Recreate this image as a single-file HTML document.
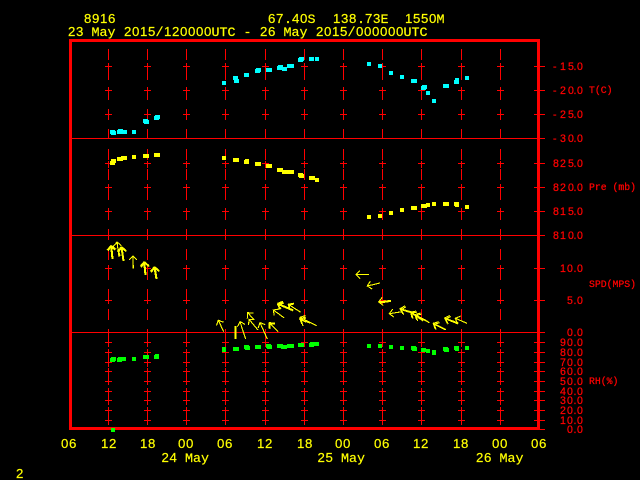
<!DOCTYPE html>
<html><head><meta charset="utf-8"><style>
html,body{margin:0;padding:0;background:#000;width:640px;height:480px;overflow:hidden}
svg{display:block;position:absolute;left:0;top:0}
.y{font:13.33px "Liberation Mono",monospace;fill:#ff0;stroke:#ff0;stroke-width:.2}
.n{font:13.2px "Liberation Sans",sans-serif;fill:#ff0;stroke:#ff0;stroke-width:.2}
.r{font:10.6px "Liberation Sans",sans-serif;fill:#f00;stroke:#f00;stroke-width:.25}
.l{font:9.8px "Liberation Mono",monospace;fill:#f00;stroke:#f00;stroke-width:.25}
</style></head><body>
<svg width="640" height="480" viewBox="0 0 640 480" xmlns="http://www.w3.org/2000/svg">
<defs>
<path id="c" fill="none" stroke="#f00" stroke-width="1" shape-rendering="crispEdges" d="M.5 49V60M.5 63V80M.5 87V100M.5 109V120M.5 129V139M.5 149V160M.5 161V168M.5 169V180M.5 184V200M.5 208V220M.5 229V240M.5 249V260M.5 265V280M.5 289V304M.5 309V320M.5 329V347M.5 349V367M.5 368V385M.5 388V405M.5 407V425M-3 66.5H4M-3 90.5H4M-3 114.5H4M-3 163.5H4M-3 187.5H4M-3 211.5H4M-3 268.5H4M-3 300.5H4M-3 342.5H4M-3 352.5H4M-3 362.5H4M-3 371.5H4M-3 381.5H4M-3 391.5H4M-3 400.5H4M-3 410.5H4M-3 420.5H4"/>
</defs>
<rect width="640" height="480" fill="#000"/>
<use href="#c" x="108"/><use href="#c" x="147"/><use href="#c" x="186"/><use href="#c" x="225"/><use href="#c" x="265"/><use href="#c" x="304"/><use href="#c" x="343"/><use href="#c" x="382"/><use href="#c" x="421"/><use href="#c" x="461"/><use href="#c" x="500"/>
<path fill="none" stroke="#f00" stroke-width="1" shape-rendering="crispEdges" d="M69 138.5H545M69 235.5H545M69 332.5H545M534 66.5H545M534 90.5H545M534 114.5H545M534 163.5H545M534 187.5H545M534 211.5H545M534 268.5H545M534 300.5H545M534 342.5H545M534 352.5H545M534 362.5H545M534 371.5H545M534 381.5H545M534 391.5H545M534 400.5H545M534 410.5H545M534 420.5H545M534 429.5H545"/>
<rect x="70.5" y="40.5" width="468" height="388" fill="none" stroke="#f00" stroke-width="3" shape-rendering="crispEdges"/>

<path fill="none" stroke="#0ff" stroke-width="4" stroke-linecap="square" shape-rendering="crispEdges" d="M112 132h1M113 133h1M119 132h1M120 131h1M122 132h1M124 132h1M134 132h.01M145 121h1M146 122h1M156 118h1M157 117h1M224 83h.01M235 78h1M236 81h1M246 75h1M257 71h1M258 70h1M268 70h1M269 70h1M279 68h1M280 67h1M284 69h1M289 66h1M291 66h1M300 60h1M301 59h1M311 59h1M317 59h.01M369 64h.01M380 66h.01M391 73h.01M402 77h.01M413 81h1M414 81h1M423 88h1M424 87h1M428 93h.01M434 101h.01M445 86h1M446 86h1M456 82h1M457 80h.01M467 78h.01"/>
<path fill="none" stroke="#ff0" stroke-width="4" stroke-linecap="square" shape-rendering="crispEdges" d="M112 163h1M113 161h1M119 159h1M120 159h1M123 158h1M124 158h1M134 157h.01M145 156h1M146 156h1M156 155h1M157 155h1M224 158h.01M235 160h1M236 160h1M246 162h1M247 161h.01M257 164h1M258 164h1M268 166h1M269 166h1M279 170h1M280 170h1M284 172h1M289 172h1M291 172h1M300 175h1M301 176h1M311 178h1M312 178h1M317 180h.01M369 217h.01M380 216h.01M391 213h.01M402 210h.01M413 208h1M414 208h1M423 206h1M424 206h1M428 205h.01M434 204h.01M445 204h1M446 204h1M456 204h1M457 205h.01M467 207h.01"/>
<path fill="none" stroke="#0f0" stroke-width="4" stroke-linecap="square" shape-rendering="crispEdges" d="M112 360h1M113 359h1M119 360h1M120 359h1M124 359h.01M134 359h.01M145 357h1M146 357h1M156 357h1M157 356h.01M113 430h.01M224 350h.01M224 349h.01M235 349h1M236 349h1M246 347h1M247 348h1M257 347h1M258 347h1M268 346h1M269 347h1M279 346h1M280 346h1M283 347h1M284 347h1M289 346h1M291 346h1M300 345h1M301 345h1M311 345h1M312 344h1M317 344h.01M369 346h.01M380 346h.01M391 347h.01M402 348h.01M413 348h1M414 349h1M423 350h1M424 350h.01M428 351h.01M434 352h.01M434 353h.01M445 349h1M446 350h1M456 348h1M457 349h.01M467 348h.01"/>

<path fill="none" stroke="#ff0" stroke-width="1.1" shape-rendering="crispEdges" d="
M112 259L110.7 245.7M107.1 250.1L110.7 245.7L115.1 249.3
M113 259L111.7 245.7M108.1 250.1L111.7 245.7L116.1 249.3M108 251L111 246.7L115 250
M119 257L117 242M113.4 246.4L117 242L121.4 245.6
M123 261L121 247M117.4 251.4L121 247L125.4 250.6
M124 261L122 247M118.4 251.4L122 247L126.4 250.6M118 252.4L122 248L126 251.6
M120 256L118 248
M133.3 268.7L133 256M129 260L133 256L137 260
M145 275L143.7 262M140.1 266.4L143.7 262L148.1 265.6
M146 275L144.7 262M141.1 266.4L144.7 262L149.1 265.6M141 267.4L144.7 263L149 266.6
M156 279L154 267M150.4 271.4L154 267L158.4 270.6
M157 279L155 267M151.4 271.4L155 267L159.4 270.6M151 272.4L155 268L159 271.6
M223.7 331.7L218.3 320.3M216.4 325.6L218.3 320.3L223.6 322.2
M235 326V339M236 326V339
M245.7 339L240 321.7M237.4 326.7L240 321.7L245 324.3
M258 330L249 319.3M248.6 324.9L249 319.3L254.6 319.7
M254.3 320L247.7 312.7M247.3 318.3L247.7 312.7L253.3 313.1
M267.3 339L260 322.7M258.1 328L260 322.7L265.3 324.6
M278.3 331.7L269.3 322.7M268.9 328.3L269.3 322.7L274.9 323.1
M270 328L270 323L275 323M270 329L270 324L275 324M269 323H275M269 324H274
M284 317.7L273.3 310M274.2 315.6L273.3 310L278.9 309.1
M293.3 310L277.7 303.3M279.8 308.5L277.7 303.3L282.9 301.2
M293.3 311L277.7 304.3M279.8 309.5L277.7 304.3L282.9 302.2M281 309L278 305L284 303
M300.7 312.3L288.3 304.3M289.5 309.8L288.3 304.3L293.8 303.1M290 310L289 305L294 304
M316.7 325.7L300 317.3M301.8 322.7L300 317.3L305.4 315.5
M310 323L299 319M301.8 324L300 319L305.4 317M303 326L301 320L306 318M306 322L301 320
M369 274.3L356 274.7M360 278.7L356 274.7L360 270.7
M380 283L367.3 286M372.1 289L367.3 286L370.3 281.2
M391 300.3L378.7 302M383.2 305.4L378.7 302L382.1 297.5
M391 301.3L379.7 303
M402 311.7L389.3 313.7M393.8 317.1L389.3 313.7L392.7 309.2
M413 312.3L400 308.7M402.8 313.6L400 308.7L404.9 305.9
M413 313.3L401 309.7M403.8 314.6L401 309.7L405.9 306.9
M423.3 320L410.7 312.3M412 317.8L410.7 312.3L416.2 311
M423.3 321L411.7 313.3M413 318.8L411.7 313.3L417.2 312
M428.3 321.7L415 314.7M416.7 320.1L415 314.7L420.4 313
M429.3 322.7L416 315.7M417.7 321.1L416 315.7L421.4 314
M446 329.7L433.3 323.3M435 328.7L433.3 323.3L438.7 321.6
M445 329.7L434.3 324.3M436 329.7L434.3 324.3L439.7 322.6
M458.3 323L444.7 318M447.1 323.1L444.7 318L449.8 315.6
M458.3 324L445.7 319M448.1 324.1L445.7 319L450.8 316.6
M467 323.3L455.3 318.3M457.4 323.5L455.3 318.3L460.5 316.2"/>

<text class="n" x="84 92 100 108" y="23">8916</text>
<text y="23"><tspan class="n" x="268 276">67</tspan><tspan class="y" x="284">.</tspan><tspan class="n" x="292 300">40</tspan><tspan class="y" x="307.5">S</tspan></text>
<text y="23"><tspan class="n" x="333 341 349">138</tspan><tspan class="y" x="357">.</tspan><tspan class="n" x="365 373">73</tspan><tspan class="y" x="380.5">E</tspan></text>
<text y="23"><tspan class="n" x="405 413 421 429">1550</tspan><tspan class="y" x="436.5">M</tspan></text>
<text y="36"><tspan class="n" x="68 76">23</tspan><tspan class="y" x="91.5">May</tspan><tspan class="n" x="124 132 140 148">2015</tspan><tspan class="y" x="155.5">/</tspan><tspan class="n" x="164 172 180 188 196 204">120000</tspan><tspan class="y" x="211.5">UTC</tspan><tspan class="y" x="243.5">-</tspan><tspan class="n" x="260 268">26</tspan><tspan class="y" x="283.5">May</tspan><tspan class="n" x="316 324 332 340">2015</tspan><tspan class="y" x="347.5">/</tspan><tspan class="n" x="356 364 372 380 388 396">000000</tspan><tspan class="y" x="403.5">UTC</tspan></text>

<text class="r" x="553 560 568 573.5 577" y="70">-15.0</text>
<text class="r" x="553 560 568 573.5 577" y="94">-20.0</text>
<text class="r" x="553 560 568 573.5 577" y="118">-25.0</text>
<text class="r" x="553 560 568 573.5 577" y="142">-30.0</text>
<text class="r" x="553 560 568 573.5 577" y="167">825.0</text>
<text class="r" x="553 560 568 573.5 577" y="191">820.0</text>
<text class="r" x="553 560 568 573.5 577" y="215">815.0</text>
<text class="r" x="553 560 568 573.5 577" y="239">810.0</text>
<text class="r" x="560 567 573.5 577" y="272">10.0</text>
<text class="r" x="567 573.5 577" y="304">5.0</text>
<text class="r" x="567 573.5 577" y="336">0.0</text>
<text class="r" x="560 567 573.5 577" y="346">90.0</text>
<text class="r" x="560 567 573.5 577" y="356">80.0</text>
<text class="r" x="560 567 573.5 577" y="366">70.0</text>
<text class="r" x="560 567 573.5 577" y="375">60.0</text>
<text class="r" x="560 567 573.5 577" y="385">50.0</text>
<text class="r" x="560 567 573.5 577" y="395">40.0</text>
<text class="r" x="560 567 573.5 577" y="404">30.0</text>
<text class="r" x="560 567 573.5 577" y="414">20.0</text>
<text class="r" x="560 567 573.5 577" y="424">10.0</text>
<text class="r" x="567 573.5 577" y="433">0.0</text>

<text class="l" x="589" y="93">T(C)</text>
<text class="l" x="589" y="190">Pre (mb)</text>
<text class="l" x="589" y="287">SPD(MPS)</text>
<text class="l" x="589" y="384">RH(%)</text>

<text class="n" x="61 69" y="448">06</text>
<text class="n" x="101 109" y="448">12</text>
<text class="n" x="140 148" y="448">18</text>
<text class="n" x="178 186" y="448">00</text>
<text class="n" x="217 225" y="448">06</text>
<text class="n" x="257 265" y="448">12</text>
<text class="n" x="297 305" y="448">18</text>
<text class="n" x="335 343" y="448">00</text>
<text class="n" x="374 382" y="448">06</text>
<text class="n" x="413 421" y="448">12</text>
<text class="n" x="453 461" y="448">18</text>
<text class="n" x="492 500" y="448">00</text>
<text class="n" x="531 539" y="448">06</text>
<text y="462"><tspan class="n" x="161.5 169.5">24</tspan><tspan class="y" x="185">May</tspan></text>
<text y="462"><tspan class="n" x="317.5 325.5">25</tspan><tspan class="y" x="341">May</tspan></text>
<text y="462"><tspan class="n" x="476 484">26</tspan><tspan class="y" x="499.5">May</tspan></text>
<text class="n" x="16" y="478">2</text>
</svg>
</body></html>
